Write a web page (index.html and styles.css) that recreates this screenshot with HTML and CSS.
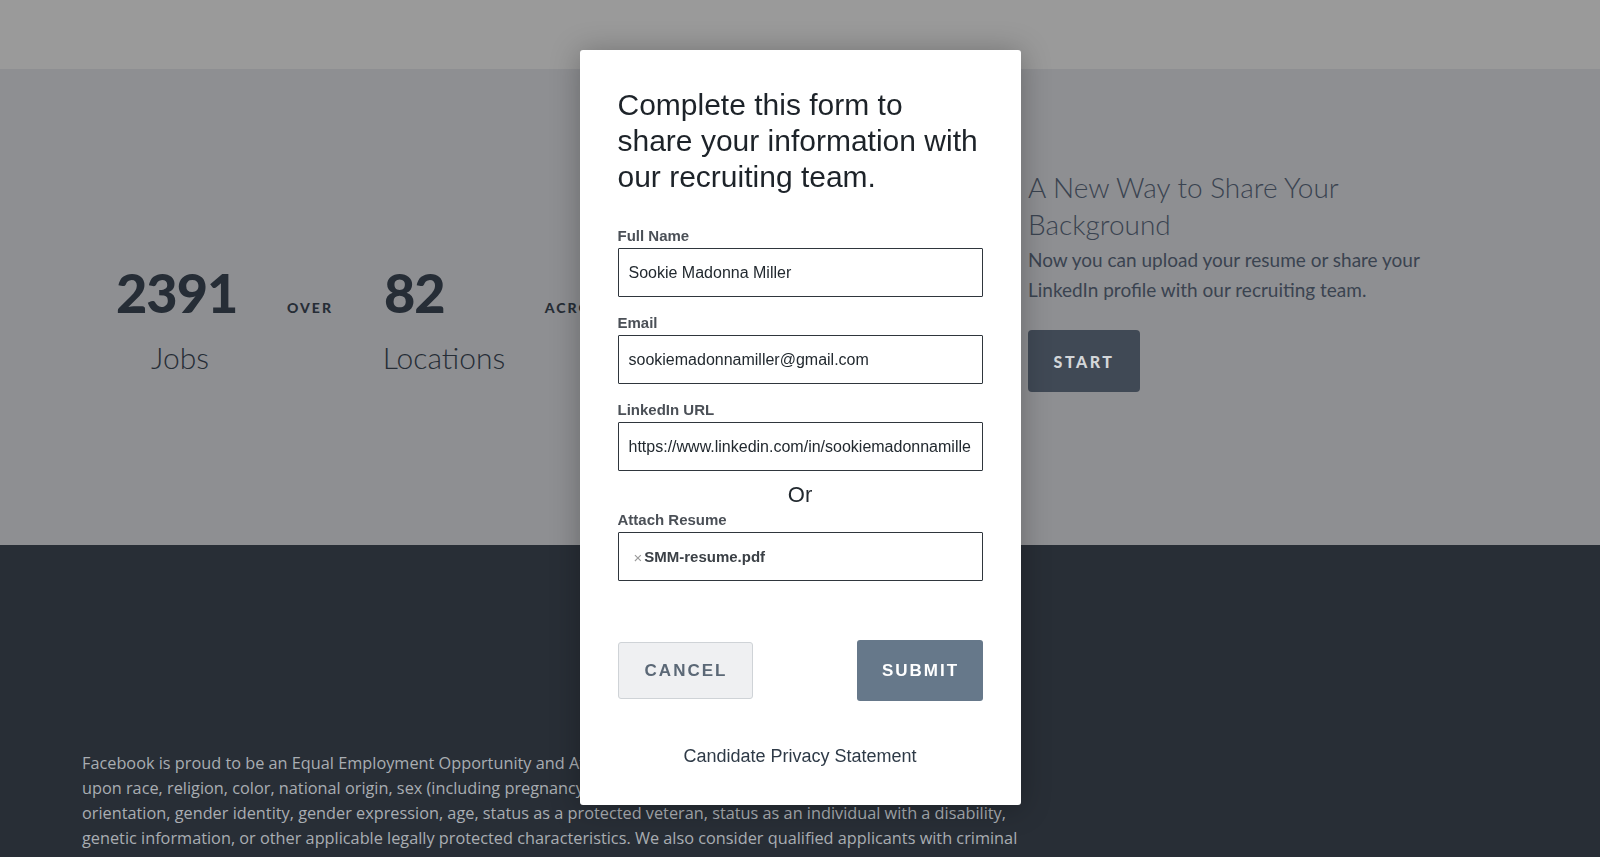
FILE: index.html
```html
<!DOCTYPE html>
<html lang="en">
<head>
<meta charset="utf-8">
<title>Careers</title>
<link rel="stylesheet" href="styles.css">
</head>
<body>
<div class="page">
  <header class="topbar"></header>
  <section class="hero">
    <div class="stats">
      <div class="num">2391</div>
      <div class="conn">OVER</div>
      <div class="num">82</div>
      <div class="conn">ACROSS</div>
      <div class="num"></div>
      <div class="stat-label stat-label-first">Jobs</div>
      <div></div>
      <div class="stat-label">Locations</div>
    </div>
    <div class="share">
      <h2 class="share-title">A New Way to Share Your<br>Background</h2>
      <p class="share-text">Now you can upload your resume or share your<br>LinkedIn profile with our recruiting team.</p>
      <button class="start-btn" type="button">START</button>
    </div>
  </section>
  <footer class="footer">
    <p class="eeo">Facebook is proud to be an Equal Employment Opportunity and Affirmative Action employer. We do not discriminate based<br>upon race, religion, color, national origin, sex (including pregnancy, childbirth, or related medical conditions), sexual<br>orientation, gender identity, gender expression, age, status as a protected veteran, status as an individual with a disability,<br>genetic information, or other applicable legally protected characteristics. We also consider qualified applicants with criminal</p>
  </footer>
</div>

<div class="modal-layer">
  <div class="modal">
    <h1 class="modal-title">Complete this form to share your information with our recruiting team.</h1>
    <form class="form">
      <div class="field">
        <label class="field-label" for="fn">Full Name</label>
        <input class="field-input" id="fn" type="text" value="Sookie Madonna Miller">
      </div>
      <div class="field">
        <label class="field-label" for="em">Email</label>
        <input class="field-input" id="em" type="text" value="sookiemadonnamiller@gmail.com">
      </div>
      <div class="field">
        <label class="field-label" for="li">LinkedIn URL</label>
        <input class="field-input" id="li" type="text" value="https://www.linkedin.com/in/sookiemadonnamiller">
      </div>
      <div class="or">Or</div>
      <div class="field field-attach">
        <span class="field-label">Attach Resume</span>
        <div class="field-input file-box"><span class="file-x">×</span><span class="file-name">SMM-resume.pdf</span></div>
      </div>
      <div class="actions">
        <button class="btn btn-cancel" type="button">CANCEL</button>
        <button class="btn btn-submit" type="button">SUBMIT</button>
      </div>
    </form>
    <div class="privacy">Candidate Privacy Statement</div>
  </div>
</div>
</body>
</html>
```
FILE: styles.css
```css
html, body {
  margin: 0;
  padding: 0;
}
body {
  width: 1600px;
  height: 857px;
  overflow: hidden;
  font-family: "Open Sans", "Liberation Sans", sans-serif;
  background: #282e36;
}
.page {
  display: flex;
  flex-direction: column;
}
.topbar {
  height: 69px;
  background: #9a9a9a;
}
.hero {
  height: 476px;
  background: #8e8f92;
  display: grid;
  grid-template-columns: 912px 1fr;
  padding-left: 116px;
}
.stats {
  padding-top: 197px;
  display: grid;
  grid-template-columns: 120px 148px 120px 148px 120px;
  grid-template-rows: auto auto;
  align-items: baseline;
  align-content: start;
}
.num {
  font-family: Lato, sans-serif;
  font-weight: 900;
  font-size: 54px;
  line-height: 54px;
  letter-spacing: -1px;
  color: #262d36;
}
.conn {
  font-family: Lato, sans-serif;
  font-weight: 900;
  font-size: 14px;
  letter-spacing: 2px;
  text-align: center;
  color: #262d36;
}
.stat-label {
  justify-self: center;
  margin-top: 19px;
  font-family: Lato, sans-serif;
  font-weight: 300;
  font-size: 30px;
  line-height: 36px;
  color: #262d36;
}
.stat-label-first {
  margin-left: 8px;
}
.share {
  padding-top: 100px;
  color: #3a4350;
}
.share-title {
  margin: 0;
  font-family: Lato, sans-serif;
  font-weight: 300;
  font-size: 28px;
  line-height: 37px;
}
.share-text {
  margin: 2px 0 0;
  font-family: Lato, sans-serif;
  font-weight: 400;
  font-size: 19px;
  line-height: 30px;
}
.start-btn {
  margin-top: 25px;
  width: 112px;
  height: 62px;
  border: 0;
  border-radius: 4px;
  background: #404955;
  color: #d3d6d9;
  font-family: Lato, sans-serif;
  font-weight: 900;
  font-size: 16px;
  letter-spacing: 2.5px;
  padding: 0;
}
.footer {
  flex: 1;
  padding: 206px 0 0 82px;
}
.eeo {
  margin: 0;
  white-space: nowrap;
  font-family: "Open Sans", sans-serif;
  font-size: 16.3px;
  line-height: 25px;
  color: #a9adb2;
}

/* modal */
.modal-layer {
  position: fixed;
  inset: 0;
  display: flex;
  justify-content: center;
  align-items: flex-start;
  padding-top: 50px;
}
.modal {
  width: 441px;
  box-sizing: border-box;
  padding: 37px 38px 38px;
  background: #fff;
  border-radius: 3px;
  box-shadow: 0 2px 30px rgba(0, 0, 0, 0.28);
  font-family: "Liberation Sans", Arial, sans-serif;
}
.modal-title {
  margin: 0 0 32px;
  font-weight: 400;
  font-size: 30px;
  line-height: 36px;
  color: #1d2329;
}
.form {
  display: flex;
  flex-direction: column;
  margin: 0;
}
.field {
  display: flex;
  flex-direction: column;
}
.field + .field {
  margin-top: 17px;
}
.field-label {
  font-weight: 700;
  font-size: 15px;
  line-height: 17px;
  margin-bottom: 4px;
  color: #4b5057;
}
.field-input {
  box-sizing: border-box;
  height: 49px;
  width: 100%;
  margin: 0;
  padding: 0 10px;
  border: 1px solid #2f363d;
  border-radius: 1px;
  font-family: "Liberation Sans", Arial, sans-serif;
  font-size: 16px;
  color: #22292f;
  background: #fff;
  outline: none;
}
.or {
  margin: 11px 0 3px;
  text-align: center;
  font-size: 22px;
  line-height: 26px;
  color: #22292f;
}
.field-attach {
  margin-top: 0;
}
.file-box {
  display: flex;
  align-items: center;
  padding-left: 15px;
}
.file-x {
  color: #9a9a9a;
  font-size: 15px;
  margin-right: 2px;
  position: relative;
  top: 1px;
}
.file-name {
  font-weight: 700;
  font-size: 15px;
  color: #3b4046;
}
.actions {
  margin-top: 59px;
  display: flex;
  justify-content: space-between;
  align-items: center;
}
.btn {
  font-family: "Liberation Sans", Arial, sans-serif;
  font-weight: 700;
  font-size: 17px;
  letter-spacing: 2px;
  border-radius: 3px;
  padding: 0;
  padding-left: 2px;
}
.btn-cancel {
  width: 135px;
  height: 57px;
  background: #eff0f2;
  border: 1px solid #cfd3d7;
  color: #5b6876;
}
.btn-submit {
  width: 126px;
  height: 61px;
  background: #66788a;
  border: 0;
  color: #fff;
}
.privacy {
  margin-top: 44px;
  text-align: center;
  font-size: 18px;
  line-height: 22px;
  color: #2e3a47;
}
```
